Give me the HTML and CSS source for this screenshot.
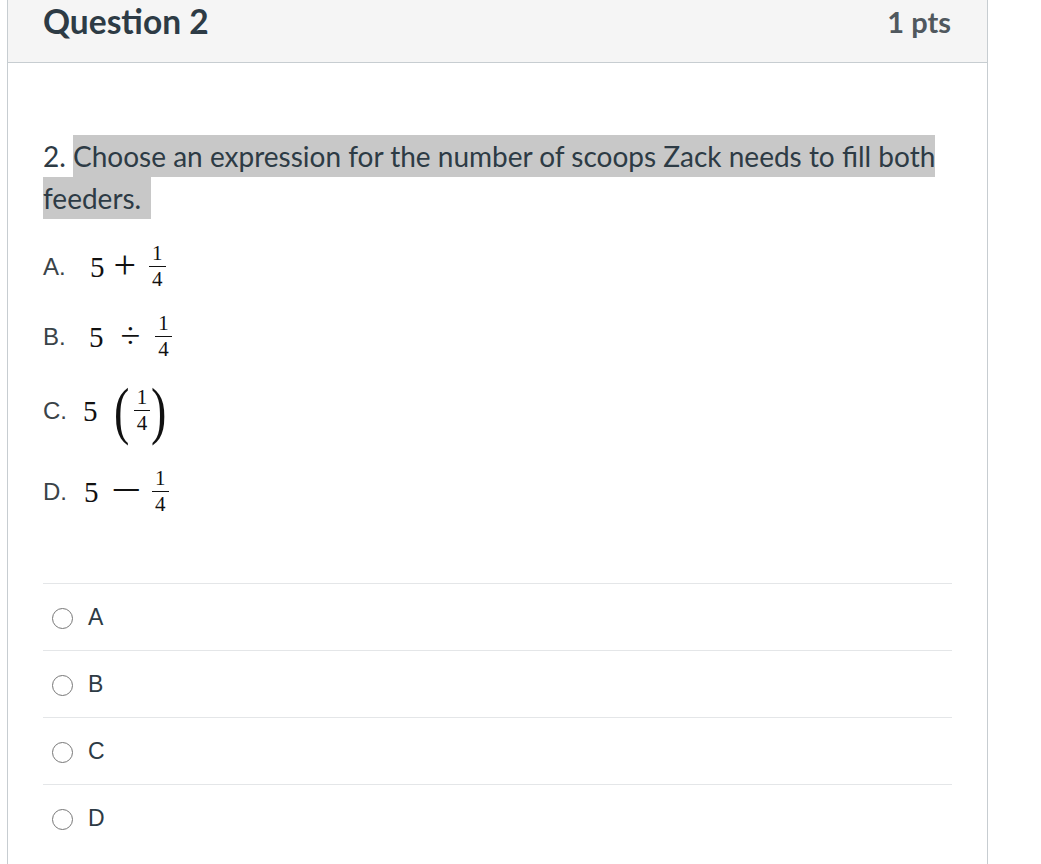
FILE: index.html
```html
<!DOCTYPE html>
<html>
<head>
<meta charset="utf-8">
<link rel="stylesheet" href="styles.css">
</head>
<body>
<div class="card">
  <div class="header">
    <span class="title">Question 2</span>
    <span class="pts">1 pts</span>
  </div>
  <div class="body">
    <p class="question">2. <span class="hl">Choose an expression for the number of scoops Zack needs to fill both feeders.</span></p>
    <div class="opt opt-a"><span class="lbl">A.</span><span class="math"><span class="n">5</span><span class="op plus">+</span><span class="frac"><span class="num">1</span><span class="den">4</span></span></span></div>
    <div class="opt opt-b"><span class="lbl">B.</span><span class="math"><span class="n">5</span><span class="op div">÷</span><span class="frac"><span class="num">1</span><span class="den">4</span></span></span></div>
    <div class="opt opt-c"><span class="lbl">C.</span><span class="math"><span class="n">5</span><span class="paren lp">(</span><span class="frac"><span class="num">1</span><span class="den">4</span></span><span class="paren rp">)</span></span></div>
    <div class="opt opt-d"><span class="lbl">D.</span><span class="math"><span class="n">5</span><span class="op minus">−</span><span class="frac"><span class="num">1</span><span class="den">4</span></span></span></div>
    <ul class="answers">
      <li><span class="radio"></span><span class="ans">A</span></li>
      <li><span class="radio"></span><span class="ans">B</span></li>
      <li><span class="radio"></span><span class="ans">C</span></li>
      <li><span class="radio"></span><span class="ans">D</span></li>
    </ul>
  </div>
</div>
</body>
</html>
```
FILE: styles.css
```css
html, body {
  margin: 0;
  padding: 0;
  background: #ffffff;
}
body {
  font-family: Lato, "Liberation Sans", sans-serif;
  color: #2d3b45;
}
.card {
  margin-left: 7px;
  width: 979px;
  border-left: 1px solid #c7cdd1;
  border-right: 1px solid #c7cdd1;
  height: 900px;
}
.header {
  height: 62px;
  background: #f5f5f5;
  border-bottom: 1px solid #c7cdd1;
  display: flex;
  justify-content: space-between;
  align-items: flex-start;
  padding: 0 36px 0 35px;
}
.title {
  font-weight: 700;
  font-size: 33.5px;
  line-height: 42px;
  color: #2d3b45;
}
.pts {
  font-weight: 700;
  font-size: 29px;
  line-height: 44px;
  color: #50585e;
}
.body {
  padding: 0 35px 0 35px;
}
.question {
  margin: 72px 0 0 0;
  font-size: 28px;
  line-height: 42px;
  color: #2d3b45;
}
.hl {
  background: #c8c8c8;
  padding: 4px 10px 4px 0;
}
.opt {
  display: flex;
  align-items: center;
  font-family: "Liberation Sans", Arial, sans-serif;
  font-size: 24px;
  color: #3a4348;
}
.opt-a { margin-top: 22px; height: 52px; }
.opt-b { margin-top: 18px; height: 52px; }
.opt-c { margin-top: 16px; height: 64px; }
.opt-d { margin-top: 23px; height: 52px; }
.lbl { width: 47px; }
.opt-b .lbl { width: 46px; }
.opt-c .lbl { width: 40px; }
.opt-d .lbl { width: 41px; }
.math {
  display: inline-flex;
  align-items: center;
  font-family: "Liberation Serif", "DejaVu Serif", serif;
  font-size: 29px;
  color: #111;
}
.op { display: inline-block; line-height: 1; }
.plus { font-size: 40px; margin: -4px 13px 0 9px; }
.div { font-size: 36px; margin: -2px 15px 0 17px; }
.minus { font-size: 40px; margin: -4px 15px 0 16px; transform: scaleX(1.35); }
.frac {
  display: inline-flex;
  flex-direction: column;
  align-items: center;
  font-size: 21px;
  line-height: 21px;
  padding: 0;
  margin-top: -2px;
}
.num {
  border-bottom: 1.4px solid #111;
  padding: 0 3px 2px;
}
.den { padding-top: 2px; }
.paren {
  font-size: 64px;
  line-height: 64px;
  display: inline-block;
  transform: scaleX(0.72);
  font-weight: 400;
}
.opt-c .n { margin-right: 13px; }
.lp { margin-right: 2px; }
.rp { margin-left: -2px; }
.answers {
  list-style: none;
  margin: 65px 0 0 0;
  padding: 0;
}
.answers li {
  border-top: 1px solid #e4e6e8;
  height: 66px;
  display: flex;
  align-items: center;
  padding-left: 9px;
  font-family: "Liberation Sans", Arial, sans-serif;
  font-size: 23px;
  color: #2d3b45;
}
.radio {
  width: 21px;
  height: 21px;
  border: 1.3px solid #777;
  border-radius: 50%;
  margin-right: 15px;
  margin-top: 2px;
  box-sizing: border-box;
}
```
